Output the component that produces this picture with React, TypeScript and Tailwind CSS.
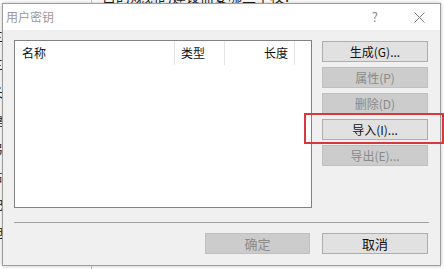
const font = "font-['Noto_Sans_CJK_SC','Microsoft_YaHei',sans-serif]";

const sideButtons = [
  { label: "生成(G)...", enabled: true },
  { label: "属性(P)", enabled: false },
  { label: "删除(D)", enabled: false },
  { label: "导入(I)...", enabled: true },
  { label: "导出(E)...", enabled: false },
];

function WinButton({
  label,
  enabled,
  className = "",
}: {
  label: string;
  enabled: boolean;
  className?: string;
}) {
  return (
    <div
      className={`flex h-[21px] items-center justify-center border text-[12px] leading-none ${
        enabled
          ? "border-[#adadad] bg-[#e1e1e1] text-[#111]"
          : "border-[#bfbfbf] bg-[#cccccc] text-[#8a8a8a]"
      } ${className}`}
    >
      {label}
    </div>
  );
}

export default function App() {
  return (
    <div className={`relative h-[269px] w-[444px] overflow-hidden bg-white ${font}`}>
      {/* page behind the dialog */}
      <div className="flex h-full">
        <div className="relative w-[92px] border-r border-[#c8c8c8]">
          <div className="ml-[-9px] flex flex-col gap-[14px] pt-[2px] text-[12px] leading-[14px] text-[#222]">
            <span>S</span>
            <span>三</span>
            <span>三</span>
            <span>长</span>
            <span>建</span>
            <span>另</span>
            <span>占</span>
            <span>肥</span>
            <span>胆纸</span>
          </div>
        </div>
        <div className="flex-1">
          <p className="mt-[-11px] pl-[10px] text-[14px] leading-[14px] text-[#222]">
            目的规划的建设需要哪些学校?
          </p>
        </div>
      </div>

      {/* dialog window */}
      <div className="absolute left-[2px] top-[3px] flex h-[263px] w-[439px] flex-col border border-[#9c9c9c] bg-[#f0f0f0] shadow-[0_0_4px_rgba(0,0,0,0.25)]">
        <div className="flex h-[26px] items-center bg-white pl-[3px] text-[12px] text-[#9a9a9a]">
          <span>用户密钥</span>
          <span className="ml-auto mr-[36px] text-[13px] text-[#8c8c8c]">?</span>
          <svg
            width="11"
            height="11"
            viewBox="0 0 11 11"
            className="mr-[15px]"
            stroke="#7a7a7a"
            strokeWidth="1"
          >
            <line x1="0.5" y1="0.5" x2="10.5" y2="10.5" />
            <line x1="10.5" y1="0.5" x2="0.5" y2="10.5" />
          </svg>
        </div>

        <div className="flex pl-[11px] pt-[10px]">
          <div className="h-[168px] w-[298px] border border-[#828282] bg-white">
            <div className="flex h-[24px] items-center text-[12px] text-[#111]">
              <div className="flex h-full w-[160px] items-center border-r border-[#e5e5e5] pl-[7px]">
                名称
              </div>
              <div className="flex h-full w-[50px] items-center border-r border-[#e5e5e5] pl-[6px]">
                类型
              </div>
              <div className="flex h-full w-[70px] items-center justify-end border-r border-[#e5e5e5] pr-[6px]">
                长度
              </div>
            </div>
          </div>

          <div className="ml-[10px] mt-[1px] flex w-[106px] flex-col gap-[5px]">
            {sideButtons.map((b) => (
              <WinButton key={b.label} label={b.label} enabled={b.enabled} />
            ))}
          </div>
        </div>

        <div className="ml-[11px] mt-[14px] h-px w-[415px] bg-[#a0a0a0]" />

        <div className="ml-[202px] mt-[10px] flex gap-[12px]">
          <WinButton label="确定" enabled={false} className="w-[105px] text-[13px]" />
          <WinButton label="取消" enabled={true} className="w-[106px] text-[13px]" />
        </div>
      </div>

      {/* red highlight annotation */}
      <div className="absolute left-[304px] top-[113px] h-[31px] w-[140px] border-2 border-[#d6383f]" />
    </div>
  );
}
